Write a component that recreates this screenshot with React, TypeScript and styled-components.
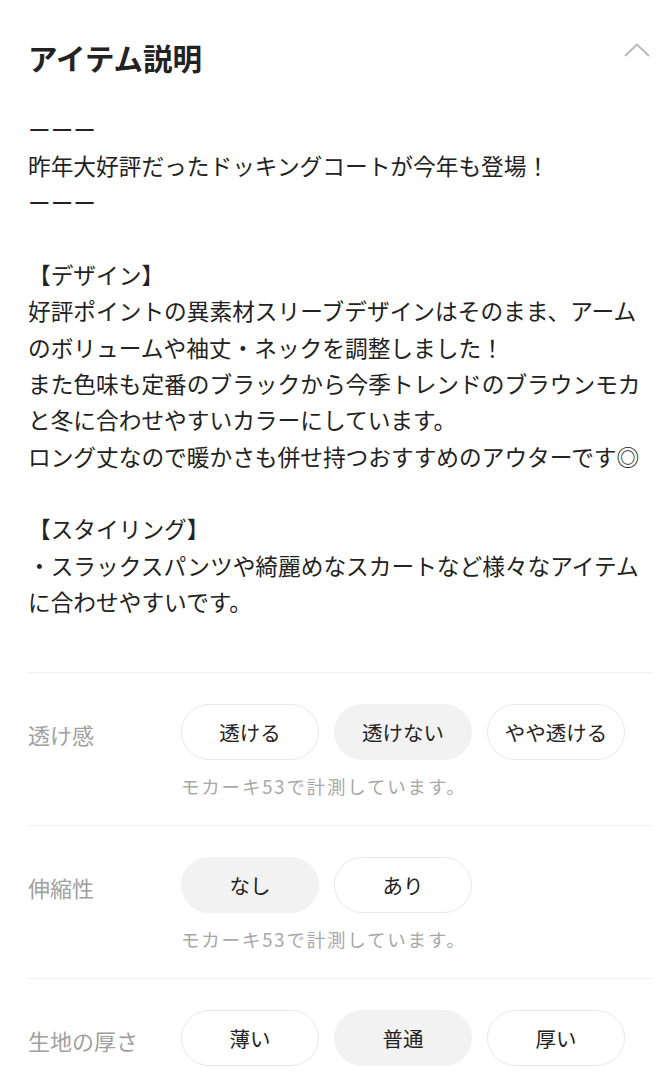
import React from "react";
import styled, { createGlobalStyle } from "styled-components";

const GlobalStyle = createGlobalStyle`
  html, body {
    margin: 0;
    padding: 0;
    background: #ffffff;
  }
  body {
    font-family: "Noto Sans CJK JP", "Noto Sans", sans-serif;
    color: #222222;
  }
`;

interface Attribute {
  label: string;
  options: string[];
  selected: number;
  note?: string;
}

const description = [
  "ーーー",
  "昨年大好評だったドッキングコートが今年も登場！",
  "ーーー",
  "",
  "【デザイン】",
  "好評ポイントの異素材スリーブデザインはそのまま、アームのボリュームや袖丈・ネックを調整しました！",
  "また色味も定番のブラックから今季トレンドのブラウンモカと冬に合わせやすいカラーにしています。",
  "ロング丈なので暖かさも併せ持つおすすめのアウターです◎",
  "",
  "【スタイリング】",
  "・スラックスパンツや綺麗めなスカートなど様々なアイテムに合わせやすいです。",
];

const attributes: Attribute[] = [
  {
    label: "透け感",
    options: ["透ける", "透けない", "やや透ける"],
    selected: 1,
    note: "モカーキ53で計測しています。",
  },
  {
    label: "伸縮性",
    options: ["なし", "あり"],
    selected: 0,
    note: "モカーキ53で計測しています。",
  },
  {
    label: "生地の厚さ",
    options: ["薄い", "普通", "厚い"],
    selected: 1,
  },
];

function App() {
  return (
    <>
      <GlobalStyle />
      <Panel>
        <Header>
          <Title>アイテム説明</Title>
          <Chevron viewBox="0 0 26 14" aria-hidden>
            <path d="M1 13 L13 1.5 L25 13" />
          </Chevron>
        </Header>

        <Body>
          {description.map((line, i) => (
            <Line key={i}>{line === "" ? "\u00a0" : line}</Line>
          ))}
        </Body>

        <AttrList>
          {attributes.map((attr) => (
            <AttrRow key={attr.label}>
              <AttrLabel>{attr.label}</AttrLabel>
              <AttrRight>
                <Pills>
                  {attr.options.map((opt, i) => (
                    <Pill key={opt} $active={i === attr.selected}>
                      {opt}
                    </Pill>
                  ))}
                </Pills>
                {attr.note && <Note>{attr.note}</Note>}
              </AttrRight>
            </AttrRow>
          ))}
        </AttrList>
      </Panel>
    </>
  );
}

const Panel = styled.div`
  width: 624px;
  padding: 37px 8px 0 28px;
`;

const Header = styled.div`
  display: flex;
  align-items: center;
  justify-content: space-between;
  height: 40px;
`;

const Title = styled.h2`
  margin: 0;
  font-size: 29.5px;
  font-weight: 700;
  line-height: 40px;
  color: #222222;
`;

const Chevron = styled.svg`
  width: 26px;
  height: 14px;
  margin: 0 2px 14px 0;
  fill: none;
  stroke: #b8b8b8;
  stroke-width: 1.8;
`;

const Body = styled.div`
  margin-top: 35px;
`;

const Line = styled.p`
  margin: 0;
  font-size: 22.7px;
  line-height: 36.3px;
  color: #222222;
`;

const AttrList = styled.div`
  margin-top: 52px;
`;

const AttrRow = styled.div`
  display: grid;
  grid-template-columns: 153px 1fr;
  align-items: start;
  border-top: 1px solid #efefef;
  padding: 31px 0 27px;
`;

const AttrLabel = styled.div`
  height: 56px;
  display: flex;
  align-items: center;
  font-size: 22px;
  color: #a0a0a0;
  padding-top: 4px;
  box-sizing: border-box;
`;

const AttrRight = styled.div`
  display: flex;
  flex-direction: column;
`;

const Pills = styled.div`
  display: flex;
  gap: 15px;
`;

const Pill = styled.div<{ $active: boolean }>`
  width: 138px;
  height: 56px;
  box-sizing: border-box;
  border-radius: 28px;
  display: flex;
  align-items: center;
  justify-content: center;
  font-size: 20.5px;
  color: #222222;
  background: ${(p) => (p.$active ? "#f2f2f2" : "#ffffff")};
  border: 1.5px solid ${(p) => (p.$active ? "#f2f2f2" : "#e8e8e8")};
`;

const Note = styled.div`
  margin-top: 14px;
  font-size: 18.5px;
  line-height: 24px;
  letter-spacing: 1.8px;
  color: #a8a8a8;
`;

export default App;
